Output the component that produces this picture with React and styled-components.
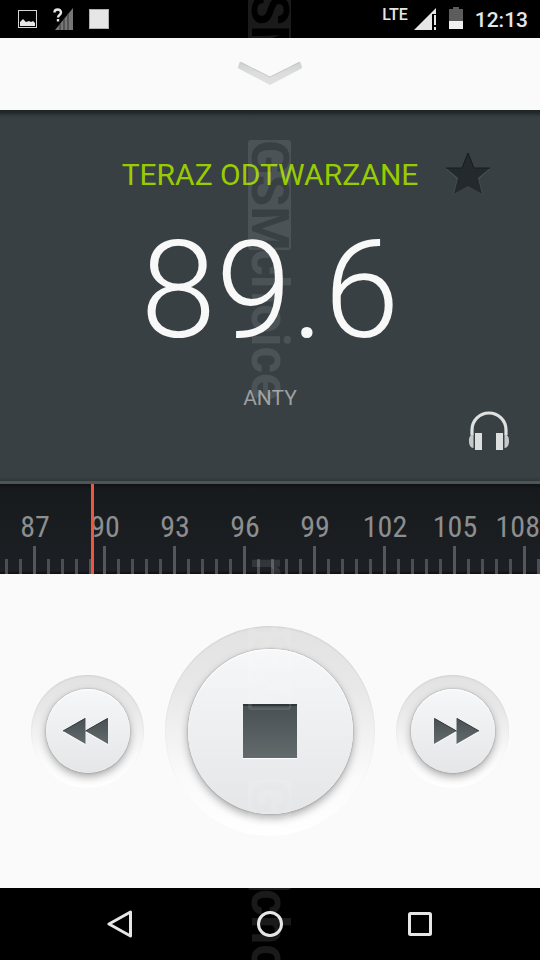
import React from "react";
import styled, { createGlobalStyle } from "styled-components";

const GlobalStyle = createGlobalStyle`
  * { box-sizing: border-box; }
  body {
    margin: 0;
    background: #fafafa;
    font-family: Roboto, "Noto Sans", sans-serif;
  }
  button {
    border: 0;
    padding: 0;
    background: none;
    font: inherit;
    cursor: pointer;
  }
  svg { display: block; }
`;

const Page = styled.div`
  position: relative;
  display: flex;
  flex-direction: column;
  min-height: 100vh;
  overflow: hidden;
`;

const StatusBar = styled.header`
  display: flex;
  justify-content: space-between;
  height: 38px;
  padding: 0 12px 0 18px;
  background: #000;
  color: #e6e6e6;
`;

const StatusGroup = styled.div`
  display: flex;
  align-items: center;
  gap: ${(p) => p.$gap}px;
`;

const Network = styled.span`
  font-size: 16px;
  font-weight: 500;
  line-height: 16px;
  padding-bottom: 8px;
`;

const Clock = styled.time`
  font-size: 21px;
  font-weight: 500;
  line-height: 38px;
  padding-top: 2px;
`;

const Collapse = styled.button`
  display: flex;
  align-items: center;
  justify-content: center;
  height: 72px;
`;

const Panel = styled.section`
  display: flex;
  flex-direction: column;
  padding: 43px 0 30px;
  background: linear-gradient(
    #1f2425,
    #242a2c 3px,
    #343c40 6px,
    #384043 10px,
    #384043 calc(100% - 4px),
    #2f3638
  );
`;

const TitleRow = styled.div`
  display: grid;
  grid-template-columns: 1fr auto 1fr;
  align-items: center;
  height: 44px;
`;

const Title = styled.h1`
  grid-column: 2;
  margin: 0;
  color: #99cc00;
  font-size: 30px;
  font-weight: 400;
  line-height: 44px;
`;

const Favourite = styled.button`
  justify-self: start;
  margin-left: 28px;
`;

const Frequency = styled.div`
  color: #f8f8f8;
  font-size: 136px;
  font-weight: 300;
  line-height: 188px;
  text-align: center;
`;

const Station = styled.div`
  color: #9d9fa0;
  font-size: 21px;
  line-height: 26px;
  text-align: center;
`;

const Output = styled.button`
  align-self: flex-end;
  margin-right: 31px;
`;

const Dial = styled.section`
  position: relative;
  display: flex;
  flex-direction: column;
  justify-content: space-between;
  height: 93px;
  border-top: 3px solid #4d5558;
  background: linear-gradient(#101214, #171a1d 5%, #181c1f 30%, #1c2024 96%, #100e12);
`;

const Labels = styled.div`
  display: flex;
  padding-top: 25px;
`;

const DialLabel = styled.span`
  flex: 0 0 70px;
  color: #8d8e8f;
  font-family: "Roboto Condensed", "Liberation Sans Narrow", Roboto, sans-serif;
  font-size: 30px;
  line-height: 36px;
  text-align: center;

  &:last-child {
    flex: 1 0 50px;
    text-align: right;
  }
`;

const Ruler = styled.div`
  height: 28px;
  background-image: linear-gradient(90deg, #54585c 3px, transparent 3px),
    linear-gradient(90deg, #4b4f53 3px, transparent 3px);
  background-position: 33px 0, 5px 13px;
  background-size: 70px 28px, 14px 28px;
  background-repeat: repeat-x;
`;

const Pointer = styled.div`
  position: absolute;
  top: 0;
  bottom: 0;
  left: 91px;
  width: 3px;
  background: #f0553f;
`;

const Controls = styled.main`
  display: flex;
  flex: 1;
  align-items: center;
  justify-content: space-between;
  padding: 0 31px;
  background: #fafafa;
`;

const Knob = styled.button`
  display: flex;
  align-items: center;
  justify-content: center;
  width: ${(p) => (p.$large ? 210 : 113)}px;
  height: ${(p) => (p.$large ? 210 : 113)}px;
  border-radius: 50%;
  background: linear-gradient(#e2e2e2, #e8e8e8 30%, #fafafa 72%, #fff);
  box-shadow: inset 0 1px 2px rgba(0, 0, 0, 0.08);
`;

const Cap = styled.span`
  display: flex;
  align-items: center;
  justify-content: center;
  width: ${(p) => (p.$large ? 165 : 84)}px;
  height: ${(p) => (p.$large ? 165 : 84)}px;
  border-radius: 50%;
  background: linear-gradient(#f6f7f9, #e5e6e8);
  box-shadow: 0 0 2px rgba(0, 0, 0, 0.35), 0 4px 8px rgba(0, 0, 0, 0.32),
    inset 0 1px 1px #fff;
`;

const NavBar = styled.nav`
  display: flex;
  justify-content: center;
  height: 72px;
  background: #000;
`;

const NavButton = styled.button`
  display: flex;
  align-items: center;
  justify-content: center;
  width: 150px;
`;

const Watermark = styled.div`
  position: absolute;
  inset: 0;
  display: flex;
  justify-content: center;
  overflow: hidden;
  pointer-events: none;
`;

const BrandText = styled.text`
  font-family: Roboto, sans-serif;
  font-size: 51px;
  font-weight: 700;
`;

function GlyphGradient({ id }) {
  return (
    <linearGradient id={id} x1="0" y1="0" x2="0" y2="1">
      <stop offset="0" stopColor="#485053" />
      <stop offset="1" stopColor="#626a6c" />
    </linearGradient>
  );
}

function Brand({ id, y, tail }) {
  return (
    <g transform={`translate(0 ${y})`}>
      <mask id={id} maskUnits="userSpaceOnUse" x="0" y="0" width="44" height="112">
        <rect width="44" height="112" fill="#fff" fillOpacity="1" />
        <BrandText transform="translate(4 0) rotate(90)" fill="#000" fillOpacity="1">
          GSM
        </BrandText>
      </mask>
      <rect width="43" height="110" rx="3" mask={`url(#${id})`} />
      {tail && <BrandText transform="translate(4 109) rotate(90)">choice</BrandText>}
    </g>
  );
}

const labels = [87, 90, 93, 96, 99, 102, 105, 108];

export default function App() {
  return (
    <Page>
      <GlobalStyle />
      <StatusBar>
        <StatusGroup $gap={16}>
          <svg width="19" height="18" viewBox="0 0 19 18">
            <rect x="0.5" y="0.5" width="18" height="17" fill="none" stroke="#d6d6d6" />
            <path d="M2 16v-4l3-3 3 3 3-1 2 1 2-1 2 2v3z" fill="#e6e6e6" />
          </svg>
          <svg width="20" height="22" viewBox="0 0 20 22">
            <path d="M20 0v22H2z" fill="#777" />
            <path d="M7 16v6M11 11v11M15 6v16" stroke="#333" />
            <path
              d="M2 4.500C2 .5 8 .5 8 4.500 8 7.500 5 7 5 10"
              fill="none"
              stroke="#000"
              strokeWidth="4"
            />
            <path
              d="M1.500 4.500C1.500 .5 8 .5 8 4.500 8 7 5 7 5 9.500M5 11v2.500"
              fill="none"
              stroke="#e6e6e6"
              strokeWidth="2.400"
            />
          </svg>
          <svg width="20" height="20" viewBox="0 0 20 20">
            <rect x="0.500" y="0.500" width="19" height="19" fill="#e6e6e6" stroke="#b0b0b0" />
          </svg>
        </StatusGroup>
        <StatusGroup $gap={6}>
          <Network>LTE</Network>
          <StatusGroup $gap={12}>
            <svg width="23" height="22" viewBox="0 0 23 22">
              <path d="M22 0v6h-4v16H0z" fill="#e6e6e6" />
              <path d="M21 7v10M21 19v3" stroke="#e6e6e6" strokeWidth="2" />
            </svg>
            <StatusGroup $gap={12}>
              <svg width="14" height="24" viewBox="0 0 14 24">
                <path d="M0 2h4V0h6v2h4v13H0z" fill="#5c5c5c" />
                <path d="M0 14h14v8H0z" fill="#f0f0f0" />
              </svg>
              <Clock>12:13</Clock>
            </StatusGroup>
          </StatusGroup>
        </StatusGroup>
      </StatusBar>

      <Collapse aria-label="Zwiń">
        <svg width="66" height="26" viewBox="0 0 66 26">
          <defs>
            <linearGradient id="chevron" x1="0" y1="0" x2="0" y2="1">
              <stop offset="0" stopColor="#cfd0d0" />
              <stop offset="0.500" stopColor="#dcdddd" />
              <stop offset="1" stopColor="#e0e0e0" />
            </linearGradient>
          </defs>
          <path
            d="M4 1Q3 .5 2.500 1.500L1 6Q.6 7 1.500 7.500L33 24 64.500 7.500Q65.400 7 65 6L63.500 1.500Q63 .5 62 1L33 16z"
            fill="url(#chevron)"
          />
          <path d="M4 1.500L33 16 62 1.500" fill="none" stroke="#c6c7c7" />
        </svg>
      </Collapse>

      <Panel>
        <TitleRow>
          <Title>TERAZ ODTWARZANE</Title>
          <Favourite aria-label="Dodaj do ulubionych">
            <svg width="44" height="44" viewBox="0 0 44 44">
              <path d="M22 2l6 14h16L33 26l4 16-15-9-15 9 4-16L0 16h16z" fill="#475053" />
              <path d="M22 0l6 15h16L32 25l4 16-14-8-14 8 4-16L0 15h16z" fill="#23292c" />
              <path d="M0 15h16l6-15 6 15h16" fill="none" stroke="#171c1e" />
            </svg>
          </Favourite>
        </TitleRow>
        <Frequency>89.6</Frequency>
        <Station>ANTY</Station>
        <Output aria-label="Słuchawki">
          <svg width="40" height="40" viewBox="0 0 40 40">
            <path d="M3 24V19a17 17 0 0 1 34 0v5" fill="none" stroke="#dfe0e0" strokeWidth="3.200" />
            <path
              d="M4.500 23v14C1.500 37 0 34 0 30s1-6 4.500-7zM35.500 23v14c3 0 4.500-3 4.500-7s-1-6-4.500-7z"
              fill="#c6c9ca"
            />
            <path d="M6 22h7v17H6zM27 22h7v17h-7z" fill="#dddfdf" />
          </svg>
        </Output>
      </Panel>

      <Dial aria-label="Skala częstotliwości">
        <Labels>
          {labels.map((n) => (
            <DialLabel key={n}>{n}</DialLabel>
          ))}
        </Labels>
        <Ruler />
        <Pointer />
      </Dial>

      <Controls>
        <Knob aria-label="Poprzednia stacja">
          <Cap>
            <svg width="50" height="28" viewBox="0 0 50 28">
              <defs>
                <GlyphGradient id="previous-fill" />
              </defs>
              <path d="M0 15L22.500 2v26zM22.500 15L45 2v26z" fill="#fff" />
              <path d="M0 14L22.500 1v26zM22.500 14L45 1v26z" fill="url(#previous-fill)" />
              <path d="M0 14L22 1.500M22.500 14L44.500 1.500" stroke="#333a3c" />
            </svg>
          </Cap>
        </Knob>
        <Knob $large aria-label="Zatrzymaj">
          <Cap $large>
            <svg width="54" height="55" viewBox="0 0 54 55">
              <defs>
                <GlyphGradient id="stop-fill" />
              </defs>
              <rect y="1" width="54" height="54" fill="#fff" />
              <rect width="54" height="54" fill="url(#stop-fill)" />
              <path d="M0 1h54" stroke="#30373a" strokeWidth="2" />
            </svg>
          </Cap>
        </Knob>
        <Knob aria-label="Następna stacja">
          <Cap>
            <svg width="38" height="28" viewBox="0 0 38 28" overflow="visible">
              <defs>
                <GlyphGradient id="next-fill" />
              </defs>
              <path d="M0 2l22.500 13L0 28zM22.500 2L45 15 22.500 28z" fill="#fff" />
              <path d="M0 1l22.500 13L0 27zM22.500 1L45 14 22.500 27z" fill="url(#next-fill)" />
              <path d="M.5 1.500L22.500 14M23 1.500L45 14" stroke="#333a3c" />
            </svg>
          </Cap>
        </Knob>
      </Controls>

      <NavBar>
        <NavButton aria-label="Wstecz">
          <svg
            width="26"
            height="28"
            viewBox="0 0 26 28"
            fill="none"
            stroke="#e6e6e6"
            strokeWidth="3"
            strokeLinejoin="round"
          >
            <path d="M2 14L23.500 2v24z" />
          </svg>
        </NavButton>
        <NavButton aria-label="Ekran główny">
          <svg width="26" height="26" viewBox="0 0 26 26">
            <circle cx="13" cy="13" r="11.500" fill="none" stroke="#e6e6e6" strokeWidth="3" />
          </svg>
        </NavButton>
        <NavButton aria-label="Ostatnie">
          <svg width="24" height="24" viewBox="0 0 24 24">
            <rect x="1.500" y="1.500" width="21" height="21" rx="1" fill="none" stroke="#e6e6e6" strokeWidth="3" />
          </svg>
        </NavButton>
      </NavBar>

      <Watermark aria-hidden="true">
        <svg width="44" height="960" viewBox="0 0 44 960" fill="#fff" fillOpacity="0.1">
          <Brand id="brand-top" y={-41} />
          <Brand id="brand-panel" y={140} tail />
          <BrandText transform="translate(4 557) rotate(90)">r</BrandText>
          <Brand id="brand-stop" y={600} />
          <Brand id="brand-bottom" y={780} tail />
        </svg>
      </Watermark>
    </Page>
  );
}
